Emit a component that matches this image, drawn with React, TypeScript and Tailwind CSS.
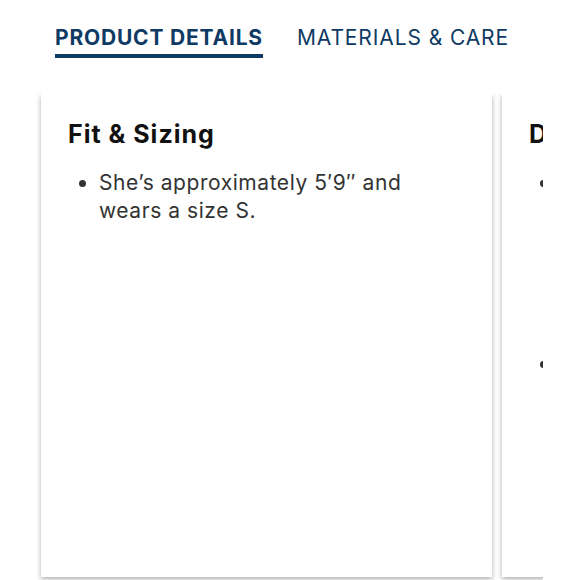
import React from "react";

export default function App() {
  return (
    <div className="w-[579px] h-[580px] bg-white overflow-hidden" style={{ fontFamily: "Inter, 'Noto Sans', sans-serif" }}>
      <div className="flex items-start pl-[55px] pt-[25px] gap-[34px]">
        <div className="flex flex-col">
          <span className="text-[21px] leading-[26px] font-bold text-[#0e3a63] tracking-[0.8px]">PRODUCT DETAILS</span>
          <div className="mt-[3px] h-[4px] bg-[#0e3a63]" />
        </div>
        <span className="text-[21px] leading-[26px] text-[#0e3a63] tracking-[0.9px]">MATERIALS &amp; CARE</span>
      </div>
      <div className="mt-[36px] ml-[36px] w-[507px] h-[500px] overflow-hidden pl-[5px] flex gap-[10px]">
        <div className="shrink-0 w-[451px] h-[483px] bg-white shadow-[0_2px_5px_rgba(0,0,0,0.32)] pl-[27px] pr-[27px] pt-[25px]">
          <h2 className="text-[25px] leading-[30px] font-bold text-[#111] tracking-[1px]">Fit &amp; Sizing</h2>
          <ul className="mt-[20px] list-disc pl-[31px] text-[21px] leading-[28px] text-[#333] tracking-[0.55px]">
            <li>She’s approximately 5′9″ and wears a size S.</li>
          </ul>
        </div>
        <div className="shrink-0 w-[451px] h-[483px] bg-white shadow-[0_2px_5px_rgba(0,0,0,0.32)] pl-[27px] pr-[27px] pt-[25px]">
          <h2 className="text-[25px] leading-[30px] font-bold text-[#111] tracking-[1px]">Details</h2>
          <ul className="mt-[20px] list-disc pl-[31px] text-[21px] leading-[28px] text-[#333] tracking-[0.55px]">
            <li>Relaxed fit with a soft, brushed finish for all-day comfort and easy layering through every season, with a classic crew neckline, dropped shoulders and ribbed cuffs and hem.</li>
            <li className="mt-[13px]">Machine wash cold.</li>
          </ul>
        </div>
      </div>
    </div>
  );
}
